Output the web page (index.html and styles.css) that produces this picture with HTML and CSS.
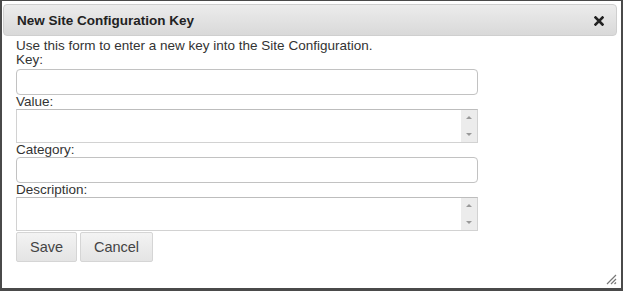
FILE: index.html
```html
<!DOCTYPE html>
<html lang="en">
<head>
    <meta charset="UTF-8">
    <title>New Site Configuration Key</title>
    <link rel="stylesheet" href="styles.css">
</head>
<body>
    <div class="window">
        <div class="titlebar">
            <span class="title">New Site Configuration Key</span>
            <span class="close" title="close">
                <svg width="10" height="10" viewBox="0 0 10 10">
                    <path d="M1.5 1.5 L8.5 8.5 M8.5 1.5 L1.5 8.5" stroke="#222" stroke-width="2.6" stroke-linecap="square"/>
                </svg>
            </span>
        </div>
        <form class="content" id="KeyForm">
            <div class="intro">Use this form to enter a new key into the Site Configuration.</div>
            <label for="key" class="first">Key:</label>
            <input type="text" id="key" name="key" class="field">

            <label for="value">Value:</label>
            <div class="textbox">
                <textarea id="value" name="value"></textarea>
                <div class="scroll"><span class="up"></span><span class="down"></span></div>
            </div>

            <label for="category">Category:</label>
            <input type="text" id="category" name="category" class="field">

            <label for="description">Description:</label>
            <div class="textbox">
                <textarea id="description" name="description"></textarea>
                <div class="scroll"><span class="up"></span><span class="down"></span></div>
            </div>

            <div class="buttons">
                <button type="submit" class="save">Save</button>
                <button type="button" class="cancel">Cancel</button>
            </div>
        </form>
        <svg class="resize" width="12" height="12" viewBox="0 0 12 12">
            <path d="M11 2 L2 11 M11 6 L6 11 M11 9.5 L9.5 11" stroke="#777" stroke-width="1.2"/>
        </svg>
    </div>
</body>
</html>
```

FILE: styles.css
```css
body {
    margin: 0;
    background: #fff;
    font-family: "Liberation Sans", Arial, sans-serif;
    color: #333;
}

.window {
    box-sizing: border-box;
    position: relative;
    width: 623px;
    height: 291px;
    border-style: solid;
    border-color: #4a4a4a;
    border-width: 1px 2px 3px 2px;
    padding: 3px 4px 0 1px;
    background: #fff;
}

.titlebar {
    box-sizing: border-box;
    height: 32px;
    display: flex;
    align-items: center;
    justify-content: space-between;
    padding: 0 12px 0 13px;
    border: 1px solid #cfcfcf;
    border-radius: 4px;
    background: linear-gradient(#ececec, #d9d9d9);
}

.title {
    font-size: 13.5px;
    font-weight: bold;
    color: #222;
}

.close {
    display: flex;
    margin-top: 1px;
}

.content {
    padding: 3px 0 0 13px;
    margin: 0;
}

.intro,
label {
    display: block;
    font-size: 13.5px;
    line-height: 14px;
    color: #333;
}

.field {
    box-sizing: border-box;
    display: block;
    width: 462px;
    height: 26px;
    margin: 0;
    padding: 3px 6px;
    border: 1px solid #c2c2c2;
    border-radius: 4px;
    background: #fff;
    font: 13.5px "Liberation Sans", Arial, sans-serif;
}

#key {
    margin-top: 2px;
}

.textbox {
    box-sizing: border-box;
    display: flex;
    width: 462px;
    height: 34px;
    border: 1px solid #d2d2d2;
    border-top-color: #bdbdbd;
    background: #fff;
}

.textbox textarea {
    flex: 1;
    border: none;
    outline: none;
    resize: none;
    padding: 2px 4px;
    font: 13.5px "Liberation Sans", Arial, sans-serif;
}

.scroll {
    width: 16px;
    display: flex;
    flex-direction: column;
    justify-content: space-between;
    align-items: center;
    padding: 6px 0 6px;
    box-sizing: border-box;
    background: #ececec;
}

.up,
.down {
    width: 0;
    height: 0;
    border-left: 3px solid transparent;
    border-right: 3px solid transparent;
}

.up {
    border-bottom: 3px solid #999;
}

.down {
    border-top: 3px solid #999;
}

.buttons {
    display: flex;
    gap: 3px;
    margin-top: 1px;
}

button {
    box-sizing: border-box;
    height: 30px;
    padding: 0;
    border: 1px solid #d5d5d5;
    border-radius: 2px;
    background: linear-gradient(#f3f3f3, #e4e4e4);
    color: #444;
    font: 14.5px "Liberation Sans", Arial, sans-serif;
    cursor: pointer;
}

.save {
    width: 61px;
}

.cancel {
    width: 73px;
}

.resize {
    position: absolute;
    right: 4px;
    bottom: 3px;
}
```
